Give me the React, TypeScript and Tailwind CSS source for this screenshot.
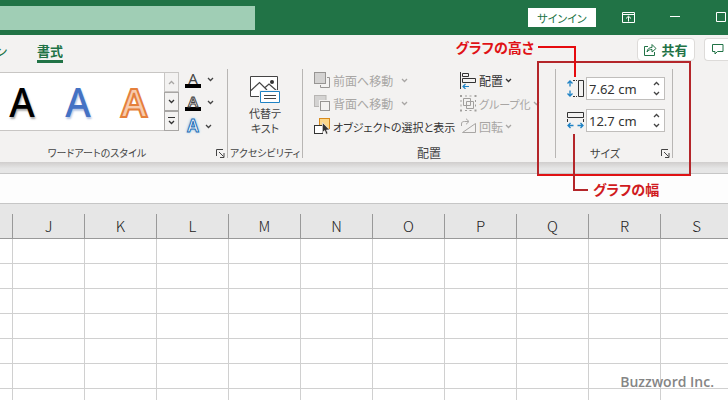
import React from 'react';

const COLUMNS = ['J', 'K', 'L', 'M', 'N', 'O', 'P', 'Q', 'R', 'S'];
const ROWS = [1, 2, 3, 4, 5, 6, 7];

interface ChevronProps {
  up?: boolean;
  className?: string;
}

const Chevron: React.FC<ChevronProps> = ({ up, className }) => (
  <svg width="7" height="5" viewBox="0 0 7 5" fill="none" stroke="currentColor" strokeWidth="1.3" className={className} aria-hidden="true">
    <path d={up ? 'M1 4 3.5 1.5 6 4' : 'M1 1 3.5 3.5 6 1'} />
  </svg>
);

const Launcher: React.FC<{ label: string }> = ({ label }) => (
  <button aria-label={label} className="text-[#444]">
    <svg width="9" height="9" viewBox="0 0 9 9" fill="none" stroke="currentColor">
      <path d="M.5 7V.5H7M3 3l4.500 4.500M8 4v4.500H4" />
    </svg>
  </button>
);

interface GroupProps {
  label: string;
  className: string;
  launcher?: boolean;
  footer?: string;
  children: React.ReactNode;
}

const Group: React.FC<GroupProps> = ({ label, className, launcher, footer = '', children }) => (
  <section className={`relative flex shrink-0 flex-col border-r border-[#b8b6b4] ${className}`}>
    <div className="flex-1">{children}</div>
    <div className="flex h-2.5 items-center">
      <h2 className={`flex-1 text-center whitespace-nowrap ${footer}`}>{label}</h2>
      {launcher && (
        <div className="flex w-[11px] shrink-0">
          <Launcher label={`${label} 設定`} />
        </div>
      )}
    </div>
  </section>
);

interface CommandProps {
  icon: React.ReactNode;
  label: string;
  disabled?: boolean;
  menu?: boolean;
  className?: string;
}

const Command: React.FC<CommandProps> = ({ icon, label, disabled, menu, className = 'gap-0.5' }) => (
  <button disabled={disabled} className="flex h-[23px] items-center gap-0.5 whitespace-nowrap text-[#333] disabled:text-[#a8a6a4]">
    {icon}
    <span className={`flex items-center ${className}`}>
      {label}
      {menu && <Chevron />}
    </span>
  </button>
);

const FrontIcon = () => (
  <svg width="17" height="17" viewBox="0 0 17 17" fill="none" stroke="#979593">
    <rect x=".5" y=".5" width="11" height="11" fill="#d4d3d2" />
    <path d="M13 5.500h2.500v10h-9V13" />
  </svg>
);

const BackIcon = () => (
  <svg width="17" height="17" viewBox="0 0 17 17" stroke="#979593">
    <rect x=".5" y=".5" width="11.500" height="11" fill="#d4d3d2" stroke="#b8b6b4" />
    <rect x="6.500" y="6.500" width="9" height="9" fill="#f3f2f1" stroke="#f3f2f1" strokeWidth="3" />
    <rect x="6.500" y="6.500" width="9" height="9" fill="#f3f2f1" />
  </svg>
);

const SelectIcon = () => (
  <svg width="17" height="17" viewBox="0 0 17 17">
    <rect x="5.500" y=".5" width="10" height="10" fill="#fcd88b" stroke="#d98a1c" />
    <rect x=".5" y="7.500" width="8" height="8" fill="#fff" stroke="#333" />
    <path d="M8.500 4.500v10l2.200-2 1.400 3.800 1.900-.8-1.500-3.500h3.200z" fill="#333" stroke="#f3f2f1" strokeWidth=".7" />
  </svg>
);

const AlignIcon = () => (
  <svg width="17" height="17" viewBox="0 0 17 17" fill="none" stroke="#333">
    <path d="M.5 0v17" />
    <path d="M2.500 1.500h6v3h-6zM2.500 6.500h13v4h-13z" />
    <path d="M9 14.500H3M5.500 12 3 14.500 5.500 17" stroke="#1e82c4" strokeWidth="1.200" />
  </svg>
);

const GroupIcon = () => (
  <svg width="17" height="17" viewBox="0 0 17 17" fill="none" stroke="#a19f9d">
    <path d="M3.500 3.500h7v7h-7zM6.500 6.500h7v7h-7z" />
    <path d="M0 1h2M14.500 1h2M0 15.500h2M14.500 15.500h2" strokeWidth="2" />
    <path d="M5 1h2M9.500 1h2M5 15.500h2M9.500 15.500h2M1 5v2M1 9.500v2M15.500 5v2M15.500 9.500v2" />
  </svg>
);

const RotateIcon = () => (
  <svg width="17" height="17" viewBox="0 0 17 17" fill="none" stroke="#a8a6a4">
    <path d="M1.500 8V6c0-2 1-2.500 3-2.500h4M6 .7l3 2.800-3 2.800" />
    <path d="M2.500 14.500h13v-9z" />
  </svg>
);

const HeightIcon = () => (
  <svg width="17" height="17" viewBox="0 0 17 17" fill="none">
    <path d="M3 1v5.500M3 10.500V16M.5 3.500 3 1l2.500 2.500M.5 13.500 3 16l2.500-2.500" stroke="#1e82c4" strokeWidth="1.300" />
    <path d="M6 .5h2M9 .5h1M6 16.500h2M9 16.500h1M11.500.5h5v16h-5z" stroke="#333" />
  </svg>
);

const WidthIcon = () => (
  <svg width="17" height="17" viewBox="0 0 17 17" fill="none">
    <path d="M.5.5h16v5H.5zM.5 7v3M16.500 7v3" stroke="#333" />
    <path d="M1 13.500h5.500M10.500 13.500H16M3.500 11 1 13.500 3.500 16M13.500 11l2.500 2.500-2.500 2.500" stroke="#1e82c4" strokeWidth="1.300" />
  </svg>
);

const AltTextIcon = () => (
  <svg width="31" height="28" viewBox="0 0 31 28" fill="none" stroke="#444">
    <path d="M.5.5h27v20H.5z" fill="#fff" />
    <path d="m1 14.500 8.500-8L17 14M14.500 12l4.500-4 8 7" strokeWidth="1.200" />
    <circle cx="22" cy="6" r="2" fill="#333" stroke="none" />
    <path d="M10.500 15.500h19v11h-19z" fill="#fff" stroke="#f3f2f1" strokeWidth="3" />
    <path d="M10.500 15.500h19v11h-19z" fill="#fff" stroke="#1e82c4" />
    <path d="M14 19.500h12M14 22.500h12" />
  </svg>
);

interface SizeFieldProps {
  id: string;
  label: string;
  value: string;
  icon: React.ReactNode;
}

const SizeField: React.FC<SizeFieldProps> = ({ id, label, value, icon }) => (
  <div className="flex items-center gap-0.5">
    <label htmlFor={id} aria-label={label}>{icon}</label>
    <div className="flex h-[23px] w-[79px] items-center border border-[#c0bebc] bg-white">
      <input id={id} defaultValue={value} className="w-0 min-w-0 flex-1 pl-0.5 font-['Noto_Sans',sans-serif] text-[13px] text-[#333] outline-none" />
      <div className="flex w-4 flex-col items-center gap-[5px] text-[#444]">
        <button aria-label={`${label} 増やす`}><Chevron up className="block" /></button>
        <button aria-label={`${label} 減らす`}><Chevron className="block" /></button>
      </div>
    </div>
  </div>
);

const TitleBar = () => (
  <header className="flex h-[35px] shrink-0 items-center bg-[#217346] text-white">
    <input aria-label="検索" className="h-6 w-[255px] bg-[#a0ceb5] outline-none" />
    <div className="ml-auto flex items-center">
      <button className="h-[19px] w-[68px] bg-white text-[11px] text-[#217346]">サインイン</button>
      <button aria-label="リボンの表示オプション" className="ml-[26px]">
        <svg width="13" height="11" viewBox="0 0 13 11" fill="none" stroke="currentColor">
          <path d="M.5.5h12v10H.5zM.5 2.500h12M6.500 9.500v-5M4 6.500l2.500-2.300L9 6.500" />
        </svg>
      </button>
      <button aria-label="最小化" className="ml-[35px]">
        <svg width="10" height="11" viewBox="0 0 10 11" stroke="currentColor"><path d="M0 4.500h10" /></svg>
      </button>
      <button aria-label="最大化" className="ml-9">
        <svg width="12" height="11" viewBox="0 0 12 11" fill="none" stroke="currentColor"><path d="M.5.5h9v9h-9z" /></svg>
      </button>
    </div>
  </header>
);

const TabRow = () => (
  <div className="flex h-[29px] shrink-0 items-start justify-between">
    <nav className="flex w-[63px] justify-end gap-[30px] overflow-hidden pt-1.5 text-[13px] leading-[19px] whitespace-nowrap text-[#217346]">
      <a href="#design" className="shrink-0">ン</a>
      <a href="#format" className="shrink-0 border-b-[3px] border-[#217346] font-bold">書式</a>
    </nav>
    <div className="flex gap-[9px] pt-[3px] text-[#217346]">
      <button className="flex h-[23px] w-[58px] items-center justify-center gap-1 rounded-sm border border-[#dddbd9] bg-white text-[13px] font-bold">
        <svg width="13" height="13" viewBox="0 0 13 13" fill="none" stroke="currentColor">
          <path d="M4 3.500H.500v9h10V9M3 9c.5-3 2-4.500 5-4.500V1.500l4 4-4 3.500V6.500C6 6.500 4.500 7 3 9z" />
        </svg>
        共有
      </button>
      <button aria-label="コメント" className="flex h-[23px] w-6 items-center rounded-l-sm border border-r-0 border-[#dddbd9] bg-white pl-[7px]">
        <svg width="12" height="11" viewBox="0 0 12 11" fill="none" stroke="currentColor">
          <path d="M.5.5h10.500v7H5.500L3 10V7.500H.500z" />
        </svg>
      </button>
    </div>
  </div>
);

const WordArtGroup = () => (
  <Group label="ワードアートのスタイル" launcher footer="pl-[11px] pr-[33px] text-[10px]" className="w-[228px]">
    <div className="flex items-start pt-[3px]">
      <div className="flex h-[59px] w-[165px] items-center border-y border-[#c8c6c4] bg-white font-['Noto_Sans',sans-serif] text-[39px] leading-none font-medium">
        <button className="w-11 text-center text-black [text-shadow:1px_2px_2px_#aaa]">A</button>
        <button className="ml-3 w-11 text-center text-[#4472c4] [text-shadow:1px_2px_2px_#b4c4e4]">A</button>
        <button className="ml-3 w-11 text-center font-semibold text-[#f8cbad] [-webkit-text-stroke:2px_#e5803c]">A</button>
      </div>
      <div className="-ml-px flex w-[15px] flex-col">
        <button aria-label="上へ" className="flex h-5 items-center justify-center border border-[#c8c6c4] text-[#a8a6a4]"><Chevron up /></button>
        <button aria-label="下へ" className="flex h-[19px] items-center justify-center border border-[#a8a6a4] text-[#333]"><Chevron /></button>
        <button aria-label="その他" className="flex h-5 flex-col items-center justify-center gap-0.5 border border-[#a8a6a4] text-[#333]">
          <span className="h-px w-[7px] bg-[#333]" />
          <Chevron />
        </button>
      </div>
      <div className="ml-1.5 flex flex-col font-['Noto_Sans',sans-serif] text-[15px] leading-3 text-[#444]">
        <button aria-label="文字の塗りつぶし" className="flex h-[23px] items-start gap-1.5">
          <span className="block h-4 w-4 border-b-4 border-black text-center">A</span>
          <Chevron className="mt-[5px]" />
        </button>
        <button aria-label="文字の輪郭" className="flex h-[23px] items-start gap-1.5">
          <span className="block h-4 w-4 border-b-4 border-black text-center font-semibold text-white [-webkit-text-stroke:1px_#444]">A</span>
          <Chevron className="mt-[5px]" />
        </button>
        <button aria-label="文字の効果" className="flex h-4 items-center gap-1">
          <span className="block w-4 text-center text-[17px] font-semibold text-white [-webkit-text-stroke:1px_#1f6fb8] [text-shadow:0_0_3px_#3a9be0]">A</span>
          <Chevron />
        </button>
      </div>
    </div>
  </Group>
);

const SizeGroup = () => (
  <Group label="サイズ" launcher footer="pr-[7px] text-[11px]" className="w-[117px]">
    <div className="flex flex-col gap-[9px] pt-2 pl-[11px]">
      <SizeField id="chart-height" label="高さ" value="7.62 cm" icon={<HeightIcon />} />
      <SizeField id="chart-width" label="幅" value="12.7 cm" icon={<WidthIcon />} />
    </div>

    {/* callouts drawn over the group */}
    <div className="pointer-events-none absolute -top-2 -left-[19px] z-10 h-[115px] w-[154px] border-2 border-[#b4262a] border-b-[#e01214]" />
    <div className="pointer-events-none absolute -top-[23px] -left-[18px] z-10 h-[31px] w-[38px] border-t-2 border-r-2 border-[#e60a0e]" />
    <div className="pointer-events-none absolute top-[65px] left-[17px] z-10 h-[57px] w-[15px] border-b-2 border-l-2 border-[#b4262a]" />
    <p className="absolute -top-8 right-[138px] z-10 text-[14px] leading-5 font-bold whitespace-nowrap text-[#e01216]">グラフの高さ</p>
    <p className="absolute top-[110px] left-[37px] z-10 text-[14px] leading-5 font-bold whitespace-nowrap text-[#d01a1e]">グラフの幅</p>
  </Group>
);

const Ribbon = () => (
  <div className="flex h-[98px] shrink-0 items-start pt-[5px]">
    <div className="flex h-[89px]">
      <WordArtGroup />
      <Group label="アクセシビリティ" footer="text-[10px]" className="w-[75px]">
        <button className="flex w-full flex-col items-center pt-[7px] text-[11px]">
          <AltTextIcon />
          <span className="mt-0.5 leading-[15px]">代替テ<br />キスト</span>
        </button>
      </Group>
      <Group label="配置" className="w-[253px]">
        <div className="flex pl-[11px]">
          <div className="flex w-[146px] flex-col items-start">
            <Command icon={<FrontIcon />} label="前面へ移動" disabled menu className="gap-2" />
            <Command icon={<BackIcon />} label="背面へ移動" disabled menu className="gap-2" />
            <Command icon={<SelectIcon />} label="オブジェクトの選択と表示" className="text-[11px]" />
          </div>
          <div className="flex flex-col items-start">
            <Command icon={<AlignIcon />} label="配置" menu />
            <Command icon={<GroupIcon />} label="グループ化" disabled menu className="gap-0.5 text-[11px]" />
            <Command icon={<RotateIcon />} label="回転" disabled menu />
          </div>
        </div>
      </Group>
      <SizeGroup />
    </div>
  </div>
);

const Sheet = () => (
  <div className="min-h-0 flex-1 overflow-hidden bg-white">
    <div className="h-2.5 bg-[#e6e6e6]" />
    <table className="w-[733px] table-fixed border-separate border-spacing-0">
      <thead>
        <tr className="h-[25px] bg-[#e6e6e6] text-[15px] leading-6 text-[#222]">
          <td className="w-[13px] border-r border-b border-[#999] p-0" />
          {COLUMNS.map((name) => (
            <th key={name} scope="col" className="w-[72px] border-r border-b border-[#999] p-0 font-light">{name}</th>
          ))}
        </tr>
      </thead>
      <tbody>
        {ROWS.map((row) => (
          <tr key={row} className="h-[25px]">
            <td className="border-r border-b border-[#d0d0d0] p-0" />
            {COLUMNS.map((name) => (
              <td key={name} className="border-r border-b border-[#d0d0d0] p-0" />
            ))}
          </tr>
        ))}
      </tbody>
    </table>
  </div>
);

const App: React.FC = () => {
  return (
    <div className="relative flex h-screen flex-col overflow-hidden bg-[#f3f2f1] font-['Noto_Sans_CJK_JP',sans-serif] text-[12px] leading-4 text-[#444] [font-feature-settings:'palt']">
      <TitleBar />
      <TabRow />
      <Ribbon />
      <div className="h-3 shrink-0 border-b border-[#c6c6c6] bg-linear-to-b from-[#d0cecd] to-[#e6e6e6] to-60%" />
      <div className="h-[30px] shrink-0 border-b border-[#c6c6c6] bg-[#fdfdfd]" />
      <Sheet />
      <p className="absolute right-[14px] bottom-2 font-['Open_Sans',sans-serif] text-[14px] leading-5 font-semibold text-[#858585]">Buzzword Inc.</p>
    </div>
  );
};

export default App;
